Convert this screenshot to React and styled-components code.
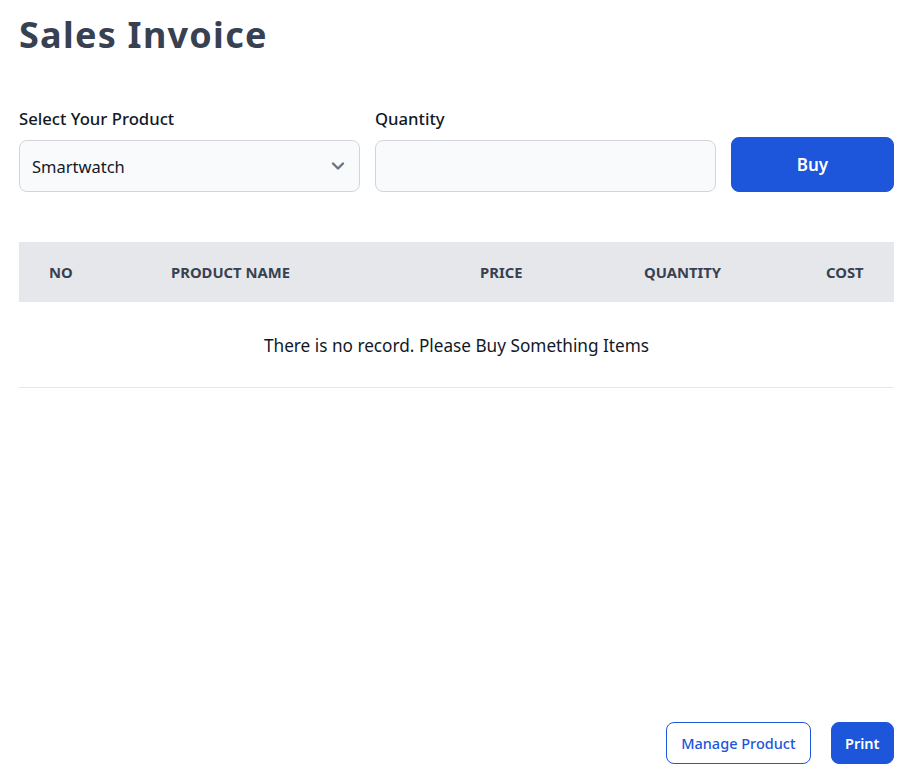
import React from "react";
import styled, { createGlobalStyle } from "styled-components";

const Global = createGlobalStyle`
  html, body { margin: 0; padding: 0; background: #fff; }
  body { font-family: "Noto Sans", "Open Sans", sans-serif; color: #111827; }
  * { box-sizing: border-box; }
`;

const Page = styled.div`
  min-height: 100vh;
  display: flex;
  flex-direction: column;
  padding: 0 13px 12px 19px;
`;

const Title = styled.h1`
  margin: 12px 0 0;
  font-size: 36px;
  line-height: 46px;
  font-weight: 700;
  letter-spacing: 0.035em;
  color: #374151;
`;

const FormRow = styled.div`
  display: grid;
  grid-template-columns: 341px 341px 163px;
  column-gap: 15px;
  align-items: end;
  margin-top: 49px;
`;

const Field = styled.div`
  display: flex;
  flex-direction: column;
  gap: 9px;
`;

const Label = styled.label`
  font-size: 16.7px;
  line-height: 24px;
  font-weight: 500;
  color: #111827;
`;

const SelectWrap = styled.div`
  position: relative;
`;

const Select = styled.select`
  appearance: none;
  width: 100%;
  height: 52px;
  padding: 0 40px 0 12px;
  font: inherit;
  font-size: 16.5px;
  color: #111827;
  background: #f9fafb;
  border: 1px solid #d1d5db;
  border-radius: 8px;
  outline: none;
`;

const Chevron = styled.svg`
  position: absolute;
  right: 12px;
  top: 50%;
  transform: translateY(-50%);
  pointer-events: none;
`;

const Input = styled.input`
  width: 100%;
  height: 52px;
  padding: 0 12px;
  font: inherit;
  font-size: 16.5px;
  background: #f9fafb;
  border: 1px solid #d1d5db;
  border-radius: 8px;
  outline: none;
`;

const Button = styled.button`
  font-family: inherit;
  border-radius: 8px;
  cursor: pointer;
  font-weight: ${(p) => (p.$outline ? 500 : 600)};
  background: ${(p) => (p.$outline ? "#fff" : "#1d56db")};
  color: ${(p) => (p.$outline ? "#1d56db" : "#fff")};
  border: 1px solid #1d56db;
  font-size: ${(p) => p.$size || 14.5}px;
  height: ${(p) => p.$h || 42}px;
  padding: 0 ${(p) => p.$px || 16}px;
`;

const BuyButton = styled(Button)`
  width: 100%;
`;

const Table = styled.table`
  margin-top: 50px;
  width: 100%;
  border-collapse: collapse;
  table-layout: fixed;
`;

const Th = styled.th`
  width: ${(p) => p.$w}px;
  height: 60px;
  padding: 0 30px;
  background: #e5e7eb;
  text-align: left;
  font-size: 14.8px;
  font-weight: 700;
  text-transform: uppercase;
  color: #374151;
  white-space: nowrap;
`;

const EmptyCell = styled.td`
  height: 85px;
  padding-top: 4px;
  text-align: center;
  font-size: 17.2px;
  color: #111827;
  border-bottom: 1px solid #e5e7eb;
`;

const Footer = styled.div`
  margin-top: auto;
  display: flex;
  justify-content: flex-end;
  gap: 20px;
`;

const columns = [
  ["No", 122],
  ["Product Name", 309],
  ["Price", 164],
  ["Quantity", 182],
  ["Cost", 98],
];

export default function App() {
  return (
    <>
      <Global />
      <Page>
        <Title>Sales Invoice</Title>
        <FormRow>
          <Field>
            <Label>Select Your Product</Label>
            <SelectWrap>
              <Select defaultValue="Smartwatch">
                <option>Smartwatch</option>
                <option>Laptop</option>
                <option>Headphones</option>
              </Select>
              <Chevron width="20" height="20" viewBox="0 0 20 20" fill="none">
                <path d="M5 7.5l5 5 5-5" stroke="#6b7280" strokeWidth="2.4" strokeLinecap="round" strokeLinejoin="round" />
              </Chevron>
            </SelectWrap>
          </Field>
          <Field>
            <Label>Quantity</Label>
            <Input type="number" />
          </Field>
          <BuyButton $h={55} $size={17}>Buy</BuyButton>
        </FormRow>
        <Table>
          <thead>
            <tr>
              {columns.map(([c, w]) => (
                <Th key={c} $w={w}>{c}</Th>
              ))}
            </tr>
          </thead>
          <tbody>
            <tr>
              <EmptyCell colSpan={5}>There is no record. Please Buy Something Items</EmptyCell>
            </tr>
          </tbody>
        </Table>
        <Footer>
          <Button $outline $px={14}>Manage Product</Button>
          <Button $px={13.5}>Print</Button>
        </Footer>
      </Page>
    </>
  );
}
